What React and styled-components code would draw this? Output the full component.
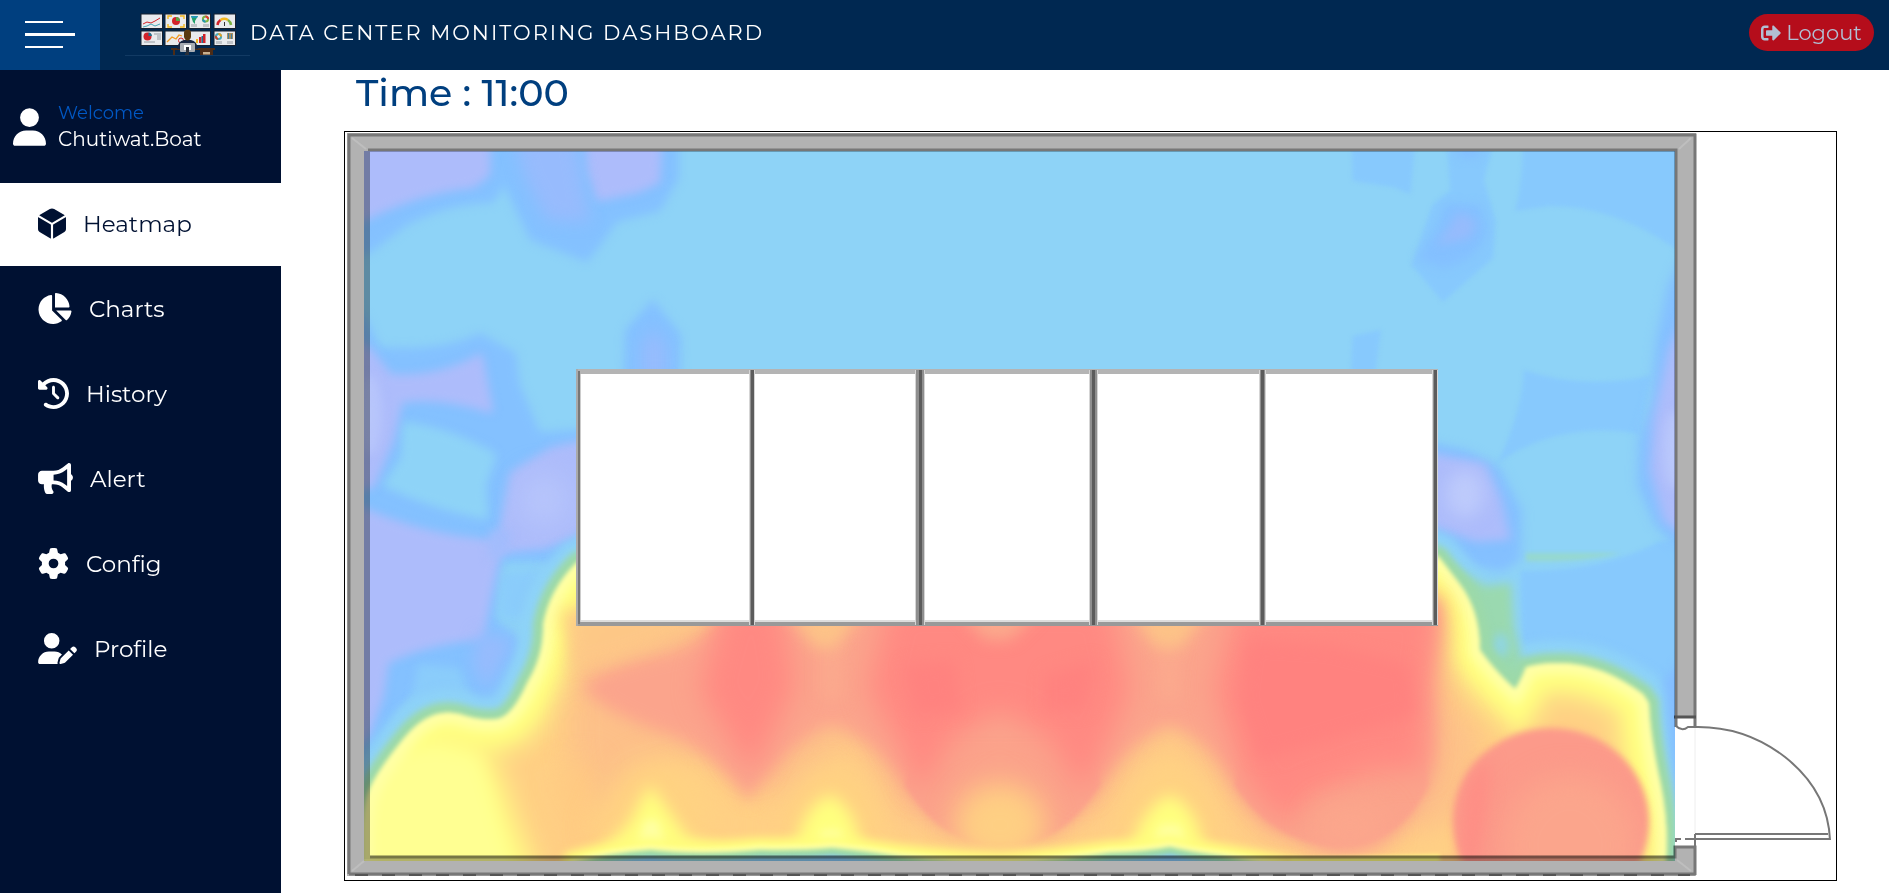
import React from 'react';
import styled, { createGlobalStyle } from 'styled-components';
import { FaChartPie, FaBullhorn, FaSignOutAlt } from 'react-icons/fa';
import { FaClockRotateLeft, FaGear, FaUserPen, FaUser } from 'react-icons/fa6';
import { IoCube } from 'react-icons/io5';

const GlobalStyle = createGlobalStyle`
  * { box-sizing: border-box; }
  body {
    margin: 0;
    background: #fff;
    font-family: Montserrat, Inter, "Open Sans", sans-serif;
  }
`;

const Page = styled.div`
  display: flex;
  flex-direction: column;
  min-height: 100vh;
`;

const TopBar = styled.header`
  display: flex;
  align-items: center;
  height: 70px;
  padding-right: 15px;
  background: #002851;
`;

const MenuButton = styled.button`
  display: flex;
  flex-direction: column;
  justify-content: center;
  gap: 10px;
  width: 100px;
  height: 70px;
  padding: 0 25px 2px;
  border: 0;
  background: #003f7f;
  cursor: pointer;
`;

const MenuLine = styled.span`
  width: ${(p) => (p.$long ? '50px' : '38px')};
  height: ${(p) => (p.$long ? '3px' : '2px')};
  background: #fff;
`;

const Logo = styled.svg`
  flex: none;
  width: 125px;
  height: 70px;
  margin-left: 25px;
`;

const Title = styled.h1`
  flex: 1;
  margin: 0;
  padding-bottom: 4px;
  color: #fff;
  font-size: 21px;
  font-weight: 400;
  line-height: 26px;
  letter-spacing: 2px;
  white-space: nowrap;
`;

const LogoutButton = styled.button`
  display: flex;
  align-items: center;
  justify-content: center;
  gap: 5px;
  width: 125px;
  height: 37px;
  margin-bottom: 5px;
  padding: 0;
  border: 0;
  border-radius: 19px;
  background: #b50d1b;
  color: #b2bfd3;
  font-family: inherit;
  font-size: 21px;
  cursor: pointer;
`;

const Body = styled.div`
  display: flex;
  flex: 1;
`;

const Sidebar = styled.aside`
  flex: none;
  width: 281px;
  background: #001132;
`;

const UserCard = styled.div`
  display: flex;
  align-items: center;
  gap: 12px;
  height: 113px;
  padding-left: 13px;
  color: #fff;

  svg {
    flex: none;
    width: 33px;
    height: 38px;
  }
`;

const UserText = styled.div`
  display: flex;
  flex-direction: column;
  padding-bottom: 2px;
  font-size: 20px;
  line-height: 26px;
`;

const Welcome = styled.span`
  color: #0058c4;
  font-size: 18px;
`;

const Nav = styled.nav`
  display: flex;
  flex-direction: column;
  gap: 2px;
`;

const NavLink = styled.a`
  display: flex;
  align-items: center;
  gap: 17px;
  height: 83px;
  padding: 0 0 2px 38px;
  background: ${(p) => (p.$active ? '#fff' : 'transparent')};
  color: ${(p) => (p.$active ? '#001132' : '#fff')};
  font-size: 23px;
  text-decoration: none;

  svg {
    flex: none;
    width: ${(p) => p.$iconWidth}px;
    height: 31px;
  }
`;

const Main = styled.main`
  flex: 1;
  min-width: 0;
  padding: 0 52px 12px 63px;
`;

const Time = styled.h2`
  margin: 0;
  padding: 0 12px 15px;
  color: #003f7f;
  font-size: 38px;
  font-weight: 500;
  line-height: 46px;
`;

const Plan = styled.svg`
  display: block;
  width: 100%;
  height: auto;
  border: 1px solid #000;
`;

const HeatLayer = styled.g`
  mix-blend-mode: multiply;
`;

const links = [
  { label: 'Heatmap', icon: IoCubeTight, width: 28 },
  { label: 'Charts', icon: FaChartPie, width: 34 },
  { label: 'History', icon: FaClockRotateLeft, width: 31 },
  { label: 'Alert', icon: FaBullhorn, width: 35 },
  { label: 'Config', icon: FaGear, width: 31 },
  { label: 'Profile', icon: FaUserPen, width: 39 },
];

function IoCubeTight() {
  return <IoCube viewBox="48 32 416 448" />;
}

const WARM =
  'M576 563 Q549 590 543 625 Q544 655 527 683 Q512 717 496 719 Q480 721 460 714 Q430 706 404 738 Q378 770 370 788 Q363 802 362 835 L362 920 L1666 920 L1666 861 Q1669 825 1661 785 Q1650 735 1649 703 L1643 694 Q1600 662 1557 663 Q1540 663 1526 667 Q1520 682 1515 689 Q1495 671 1480 650 Q1480 610 1459 583 L1439 557 L1400 540 L620 540 Z';

const EDGE =
  'M560 900 L575 863 Q610 853 650 850 Q700 856 760 850 Q800 851 832 848 Q865 851 900 857 Q950 863 1000 865 Q1060 861 1110 853 Q1145 852 1170 847 Q1190 852 1220 856 Q1250 861 1290 870 L1290 900 Z';

const RED =
  'M583 687 Q600 668 660 655 Q720 640 730 600 L1439 600 L1430 680 Q1442 740 1430 785 Q1400 850 1335 850 Q1270 840 1235 785 Q1210 740 1170 725 Q1130 740 1100 785 Q1060 848 1000 848 Q940 843 905 785 Q872 738 832 725 Q790 740 748 802 Q710 745 655 730 Q600 710 583 687 Z';

function LogoArt() {
  const screens = [[141, 14], [165, 14], [189, 14], [214, 14], [141, 31], [165, 31], [189, 31], [214, 31]];
  return (
    <Logo viewBox="125 0 125 70" aria-hidden="true">
      {screens.map(([x, y]) => (
        <rect key={`${x}-${y}`} x={x} y={y} width="21.5" height="14.5" fill="#e9ebee" stroke="#16202f" />
      ))}
      <rect x="180" y="32" width="16" height="13" fill="#e9ebee" />
      <g fill="none" strokeWidth="1">
        <path d="M143 24 l4 -2 l4 1 l4 -2 l5 -3" stroke="#d2232a" />
        <path d="M143 27 l4 -1 l4 -2 l4 2 l5 -2" stroke="#45a7b8" />
        <path d="M168 19 v-3 h4 M180 16 h4 v3 M168 24 v3 h4 M180 27 h4 v-3" stroke="#f3b81f" strokeWidth="1.4" />
        <path d="M167 42 l5 -5 l4 2 l3 -4 l3 1" stroke="#f39a1f" strokeWidth="1.3" />
        <circle cx="205.500" cy="19" r="2.600" stroke="#7cb342" strokeWidth="2" />
        <path d="M205.500 16.400 a2.600 2.600 0 0 1 2.600 2.600" stroke="#e53935" strokeWidth="2" />
        <path d="M203 19.500 a2.600 2.600 0 0 0 2.500 2.200" stroke="#2296b5" strokeWidth="2" />
        <path d="M217.500 25 a7 7 0 0 1 3 -5" stroke="#d2232a" strokeWidth="2.500" />
        <path d="M220.500 20 a7 7 0 0 1 7.500 0" stroke="#f3b81f" strokeWidth="2.500" />
        <path d="M228 20 a7 7 0 0 1 3 5" stroke="#7cb342" strokeWidth="2.500" />
        <path d="M224.500 26 v-4" stroke="#333" />
        <circle cx="181" cy="40.500" r="2.500" stroke="#d2232a" />
        <circle cx="218.500" cy="36.500" r="2.600" stroke="#45a7b8" strokeWidth="2" />
        <path d="M218.500 33.900 a2.600 2.600 0 0 1 2.600 2.600" stroke="#e9a01f" strokeWidth="2" />
        <path d="M216 36 a2.600 2.600 0 0 0 2 3" stroke="#c2452e" strokeWidth="2" />
      </g>
      <circle cx="176" cy="21" r="4" fill="#d2232a" />
      <path d="M176 21 v-4 a4 4 0 0 1 4 4 z" fill="#5aa646" />
      <path d="M191 16 h7 l-3 5 v3 l-2 -2 z" fill="#22a06b" />
      <path d="M191 16 h7 l-1 2 h-5 z" fill="#2296b5" />
      <path d="M191 24 h6 v3 h-6 z M203 24 h6 v3 h-6 z M154 33 h7 v7 h-4 v-5 h-3 z M144 41 h11 v2 h-11 z M216 41 h6 v3 h-6 z M227 41 h6 v3 h-6 z" fill="#bfc3c8" />
      <circle cx="147.500" cy="36.500" r="4" fill="#d2232a" />
      <path d="M148.500 36 v-3.500 a4 4 0 0 1 3.500 3.500 z" fill="#22708f" />
      <rect x="196" y="39" width="2" height="4" fill="#f3b81f" />
      <rect x="199" y="37" width="2.500" height="6" fill="#d2232a" />
      <rect x="203" y="34" width="2.500" height="9" fill="#d2232a" />
      <path d="M201.500 36 h1.500 v7 h-1.500 z" fill="#22708f" />
      <path d="M227 33 h6 v6 h-6 z" fill="#a9905f" />
      <path d="M228 33 h1 v6 h-1 z M231 34 h1 v5 h-1 z" fill="#3f7fa5" />
      <path d="M171 48 h44 v2 h-2 v5 h-13 v-5 h-25 v5 h-2 v-5 h-2 z" fill="#4d2c16" />
      <rect x="203" y="52" width="7" height="2.500" fill="#c9b08f" />
      <path d="M177 49 q1 -8 7 -9 h7 q6 1 7 9 z" fill="#172540" />
      <path d="M184 33 q0 -3.500 3.500 -3.500 q3.500 0 3.500 3.500 v4 q-1 3.500 -3.500 3.500 q-2.500 0 -3.500 -3.500 z" fill="#5a390f" />
      <rect x="180" y="43" width="15" height="9" rx="1" fill="#a9adb3" />
      <rect x="184" y="45" width="7" height="5" fill="#fff" />
      <path d="M186 47 h3 v8 h-4 v-2 h1 z" fill="#2a2f38" />
      <rect x="125" y="55" width="125" height="1" fill="#123a63" />
    </Logo>
  );
}

function CoolZones() {
  return (
    <>
      <g fill="#84c1ff" filter="url(#soft5)">
        <path d="M340 120 L507 120 L506 183 L493 203 Q450 203 407 225 L370 253 L340 260 Z" />
        <path d="M500 120 L679 120 L679 178 L660 211 L617 222 L600 246 L587 262 L530 240 L506 190 Z" />
        <path d="M653 299 L681 335 L680 380 L624 380 L625 330 Z" />
        <path d="M340 290 L366 318 L380 347 Q440 352 480 333 L516 353 L520 385 L540 432 L600 428 L600 590 L540 562 L502 562 L496 620 L522 640 L500 715 L478 710 L455 690 L430 678 L400 710 L362 790 L340 800 Z" />
      </g>
      <g fill="#8ed3f7" stroke="#8ed3f7" strokeWidth="8" strokeLinejoin="round" filter="url(#soft5)">
        <path d="M406 426 Q450 432 492 456 L482 485 L484 515 Q436 506 388 484 L405 458 Z" />
      </g>
      <path d="M502 574 L548 568 L530 620 L500 618 Z M418 664 L460 668 L474 704 L410 715 Z" fill="#8accfb" filter="url(#soft5)" />
      <g fill="#adbcfb" stroke="#adbcfb" strokeWidth="6" strokeLinejoin="round" filter="url(#soft5)">
        <path d="M340 120 L488 120 L487 174 L473 185 Q420 190 364 218 L340 222 Z" />
        <path d="M587 120 L660 120 L657 181 L637 190 L599 198 L590 170 Z" />
        <path d="M340 330 L370 352 L390 377 Q440 380 480 357 L490 410 Q440 394 400 400 L391 440 L372 485 L340 490 Z" />
        <path d="M600 440 L552 450 L513 474 L502 530 L502 550 L545 546 L600 524 Z" />
        <path d="M340 500 Q420 540 500 543 L489 593 L481 637 Q430 640 386 661 L381 695 L367 735 L340 760 Z" />
      </g>
      <path d="M490 530 L512 530 L508 552 L488 560 Z" fill="#a2bcfc" filter="url(#soft5)" />
      <g fill="#97bbfd" filter="url(#soft8)">
        <path d="M510 120 L573 120 L584 192 L590 222 L547 220 L526 180 Z" />
        <path d="M653 328 L666 346 L666 380 L642 380 L642 345 Z" />
        <path d="M478 632 L513 640 L487 690 L473 665 Z" />
      </g>
      <ellipse cx="544" cy="500" rx="24" ry="26" fill="#b7c5fb" filter="url(#soft14)" />
      <ellipse cx="370" cy="415" rx="12" ry="40" fill="#b7c5fb" filter="url(#soft5)" />
      <g transform="translate(-67 0) scale(1.05 1)">
        <g fill="#87c9fd" filter="url(#soft2)">
          <path d="M1514 120 L1690 120 L1690 270 L1657 247 Q1600 206 1540 206 L1507 211 Q1514 180 1514 150 Z" />
          <path d="M1515 370 Q1570 390 1636 376 L1625 434 Q1550 420 1490 463 Q1514 410 1515 370 Z" />
          <path d="M1512 571 Q1590 572 1645 541 L1690 540 L1690 800 L1655 800 L1645 702 Q1590 640 1514 647 Z" />
          <path d="M1351 120 L1414 120 L1407 194 L1390 187 L1352 181 Z" />
          <path d="M1352 336 L1379 330 L1373 380 L1350 380 Z" />
          <path d="M1440 120 L1492 120 L1477 180 L1488 220 L1486 258 L1438 302 L1408 265 L1428 205 L1445 190 Z" />
        </g>
        <g fill="#84c0ff" filter="url(#soft5)">
          <path d="M1400 436 L1460 450 L1491 466 L1513 510 L1512 560 L1494 572 L1465 565 L1400 515 Z" />
          <path d="M1690 200 L1652 286 L1641 340 L1636 400 L1624 440 L1623 485 L1640 525 L1690 580 Z" />
          <path d="M1440 203 L1474 205 L1480 235 L1466 256 L1440 269 L1413 259 L1432 230 Z" />
          <path d="M1450 143 L1477 143 L1470 158 L1455 158 Z" />
        </g>
        <g fill="#adbcfb" stroke="#adbcfb" strokeWidth="4" strokeLinejoin="round" filter="url(#soft5)">
          <path d="M1400 450 L1477 465 L1492 500 L1500 538 L1470 540 L1400 515 Z" />
          <path d="M1690 270 L1655 350 L1640 420 L1637 470 L1650 520 L1690 550 Z" />
        </g>
        <path d="M1454 211 L1470 222 L1464 238 L1432 246 Z" fill="#96bbfc" filter="url(#soft5)" />
        <ellipse cx="1459" cy="494" rx="18" ry="24" fill="#bdcafb" filter="url(#soft8)" />
        <ellipse cx="1660" cy="450" rx="12" ry="40" fill="#bac8fb" filter="url(#soft5)" />
        <path d="M1517 553 L1607 553 Q1570 563 1517 561 Z" fill="#96d8cf" filter="url(#soft2)" />
      </g>
    </>
  );
}

function WarmZones() {
  return (
    <>
      <path d={WARM} fill="none" stroke="#8ed3f7" strokeWidth="44" filter="url(#soft5)" />
      <path d="M1664 680 L1690 650 L1690 840 L1676 800 Z" fill="#84beff" filter="url(#soft5)" />
      <path d="M1439 560 L1466 574 L1486 586 L1511 583 L1514 627 L1523 665 L1515 690 L1470 655 Z" fill="#9ad9b0" filter="url(#soft5)" />
      <ellipse cx="1501" cy="645" rx="8" ry="12" fill="#90d5e0" filter="url(#soft5)" />
      <path d={WARM} fill="none" stroke="#9cd9a9" strokeWidth="20" filter="url(#soft3)" />
      <g filter="url(#soft2)">
        <g clipPath="url(#warmClip)">
          <path d={WARM} fill="#ffd085" />
          <g filter="url(#soft8)">
            <path d={WARM} fill="none" stroke="#fddd84" strokeWidth="88" />
            <path d={WARM} fill="none" stroke="#ffff80" strokeWidth="56" />
          </g>
          <path d="M340 740 L440 728 L480 738 L502 780 Q515 830 550 900 L340 900 Z" fill="#ffff84" filter="url(#soft14)" />
          <path d="M340 760 L440 748 L478 758 L488 790 Q498 830 520 900 L340 900 Z" fill="#ffff92" filter="url(#soft8)" />
          <path d={WARM} fill="none" stroke="#ffffa5" strokeWidth="22" filter="url(#soft5)" />
        </g>
      </g>
      <g clipPath="url(#warmClip)">
        <path d="M620 600 L577 650 Q560 740 578 790 Q610 842 635 780 L700 760 L780 800 L850 740 L900 820 L1000 850 L1090 820 L1170 730 L1260 840 L1340 852 L1460 820 L1480 740 L1446 690 L1435 600 Z" fill="#fcba8b" opacity=".7" filter="url(#soft14)" />
        <path d="M556 770 L594 760 L584 900 L565 850 Z" fill="#ffca82" filter="url(#soft14)" />
        <path d="M610 790 Q650 735 700 775 L720 835 L590 835 Z M790 800 Q830 735 875 800 L880 840 L780 840 Z M1130 790 Q1170 735 1212 795 L1220 840 L1120 840 Z" fill="#ffd282" filter="url(#soft14)" />
        <path d={RED} fill="#fba48c" filter="url(#soft8)" />
        <path d="M905 785 Q940 843 1000 848 Q1060 848 1100 785 L1090 740 L915 740 Z M1235 785 Q1270 840 1335 847 Q1400 847 1428 785 L1420 740 L1245 740 Z" fill="#fba38b" filter="url(#soft2)" />
        <g fill="#ff8982" filter="url(#soft14)">
          <path d="M725 600 L780 600 L795 685 L752 775 L700 690 Z" />
          <path d="M890 600 L1110 600 L1130 690 L1102 755 L1082 795 L1050 740 L1000 710 L950 740 L920 795 L900 745 L868 690 Z" />
          <path d="M1238 600 L1440 600 L1428 700 L1424 770 L1375 770 L1310 795 L1285 825 L1245 780 L1215 690 Z" />
        </g>
        <g fill="#ff827f" filter="url(#soft8)">
          <path d="M1248 640 L1330 645 L1410 665 L1415 715 L1330 740 L1260 760 L1240 700 Z" />
          <path d="M905 665 L955 660 L960 710 L915 715 Z M1045 675 L1095 660 L1085 710 L1045 710 Z" />
        </g>
        <path d="M822 626 L840 626 L842 700 L822 700 Z M1160 640 L1178 640 L1180 700 L1158 700 Z" fill="#fba98d" filter="url(#soft8)" />
        <path d="M560 610 L715 610 Q670 648 575 668 Z M785 610 L865 610 L835 648 L815 648 Z M1130 610 L1208 610 L1182 648 L1155 648 Z" fill="#fdc887" opacity=".85" filter="url(#soft8)" />
        <path d="M958 610 L1040 610 L1010 640 L985 640 Z" fill="#fba98c" filter="url(#soft8)" />
        <ellipse cx="1000" cy="825" rx="46" ry="42" fill="#fecf83" filter="url(#soft14)" />
        <ellipse cx="1350" cy="827" rx="38" ry="26" fill="#fba68c" filter="url(#soft14)" />
        <path d="M650 785 L688 838 L720 850 L600 850 L628 825 Z M830 795 Q854 805 862 850 L795 850 Q803 805 830 795 Z M1170 795 Q1196 805 1204 850 L1130 850 Q1144 805 1170 795 Z" fill="#ffff7e" filter="url(#soft8)" />
        <path d="M645 820 L658 820 L666 850 L636 850 Z M822 830 L840 830 L846 850 L816 850 Z M1160 825 L1180 825 L1188 850 L1152 850 Z" fill="#ffffa3" filter="url(#soft5)" />
        <ellipse cx="1551" cy="821" rx="98" ry="93" fill="#fc9a8a" filter="url(#soft3)" />
        <ellipse cx="1570" cy="845" rx="66" ry="70" fill="#fba58c" filter="url(#soft14)" />
        <path d="M1464 800 Q1468 775 1490 757 Q1490 800 1475 865 L1462 865 Z" fill="#fe8d85" filter="url(#soft8)" />
        <path d={EDGE} fill="#ffff85" stroke="#ffff7c" strokeWidth="24" filter="url(#soft5)" />
        <path d={EDGE} fill="#ffffa0" stroke="#ffffa0" strokeWidth="10" filter="url(#soft2)" />
        <path d={EDGE} fill="#9cd9a9" filter="url(#soft2)" />
        <path d={EDGE} fill="#84c6f6" transform="translate(0 7)" filter="url(#soft2)" />
        <path d="M1290 862 L1440 859" stroke="#ffff80" strokeWidth="8" filter="url(#soft2)" />
      </g>
    </>
  );
}

function Walls() {
  return (
    <g>
      <path d="M347 133 H1696 V717 H1675 V151 H368 V858 H1675 V847 H1696 V876 H347 Z" fill="#b2b2b2" />
      <g fill="none" stroke="#777" strokeWidth="3">
        <path d="M1695 727 V135 H349 V874" />
        <path d="M1676 727 V150 H368" />
        <path d="M368 857 H1675 V847 H1695 V875" />
        <path d="M367 151 V859" stroke="#a8a8a8" strokeWidth="6" />
        <path d="M1674 717 H1696" stroke="#555" />
        <path d="M349 874 H1695" />
        <path d="M355 875 H1690" stroke="#555" strokeDasharray="13 14" strokeWidth="2" />
      </g>
      <path d="M352 138 L366 149 M1691 138 L1679 149 M352 871 L364 861 M1691 871 L1677 860" stroke="#bebebe" strokeWidth="2" />
      <g fill="none" stroke="#777" strokeWidth="2">
        <path d="M1676 726 Q1682 732 1688 727 L1695 727 Q1745 726 1785 757 Q1828 791 1830 840" />
        <path d="M1676 842 V839 H1681 M1685 839 H1830 M1695 834 H1828 M1695 834 V847" />
      </g>
      <path d="M1695 728 V833" stroke="#eee" />
    </g>
  );
}

function Racks() {
  const dividers = [[750, 4], [916, 8], [1090, 7], [1260, 5], [1433, 4]];
  return (
    <g>
      <rect x="576" y="369" width="862" height="257" fill="#fff" />
      <rect x="576" y="369" width="862" height="5" fill="#b4b4b4" />
      <rect x="576" y="620" width="862" height="2" fill="#ddd" />
      <rect x="576" y="622" width="862" height="4" fill="#999" />
      <rect x="576" y="369" width="2" height="257" fill="#aaa" />
      <rect x="578" y="371" width="2" height="253" fill="#777" />
      <rect x="580" y="374" width="1" height="248" fill="#ccc" />
      {dividers.map(([x, w]) => (
        <g key={x}>
          <rect x={x - 1} y="370" width={w + 2} height="255" fill="#d5d5d5" />
          <rect x={x} y="370" width={w} height="255" fill="#8f8f8f" />
          <rect x={x + (w >> 1) - 1} y="370" width="3" height="255" fill="#5c5c5c" />
        </g>
      ))}
    </g>
  );
}

function FloorPlan() {
  return (
    <Plan viewBox="345 132 1491 748" role="img" aria-label="Data center temperature heatmap">
      <defs>
        {[2, 3, 5, 8, 14].map((n) => (
          <filter key={n} id={`soft${n}`} filterUnits="userSpaceOnUse" x="300" y="80" width="1600" height="900" colorInterpolationFilters="sRGB">
            <feGaussianBlur stdDeviation={n} />
          </filter>
        ))}
        <clipPath id="room"><rect x="364" y="151" width="1311" height="710" /></clipPath>
        <clipPath id="warmClip"><path d={WARM} /></clipPath>
      </defs>
      <rect x="345" y="132" width="1491" height="748" fill="#fff" />
      <Walls />
      <HeatLayer>
        <g clipPath="url(#room)">
          <rect x="364" y="151" width="1311" height="710" fill="#8ed3f7" />
          <CoolZones />
          <WarmZones />
        </g>
      </HeatLayer>
      <Racks />
    </Plan>
  );
}

export default function App() {
  return (
    <Page>
      <GlobalStyle />
      <TopBar>
        <MenuButton aria-label="Toggle menu">
          <MenuLine />
          <MenuLine $long />
          <MenuLine />
        </MenuButton>
        <LogoArt />
        <Title>DATA CENTER MONITORING DASHBOARD</Title>
        <LogoutButton>
          <FaSignOutAlt size={20} />
          Logout
        </LogoutButton>
      </TopBar>
      <Body>
        <Sidebar>
          <UserCard>
            <FaUser />
            <UserText>
              <Welcome>Welcome</Welcome>
              <span>Chutiwat.Boat</span>
            </UserText>
          </UserCard>
          <Nav>
            {links.map(({ label, icon: Icon, width }) => (
              <NavLink key={label} href="#" $active={label === 'Heatmap'} $iconWidth={width}>
                <Icon />
                {label}
              </NavLink>
            ))}
          </Nav>
        </Sidebar>
        <Main>
          <Time>Time : 11:00</Time>
          <FloorPlan />
        </Main>
      </Body>
    </Page>
  );
}
